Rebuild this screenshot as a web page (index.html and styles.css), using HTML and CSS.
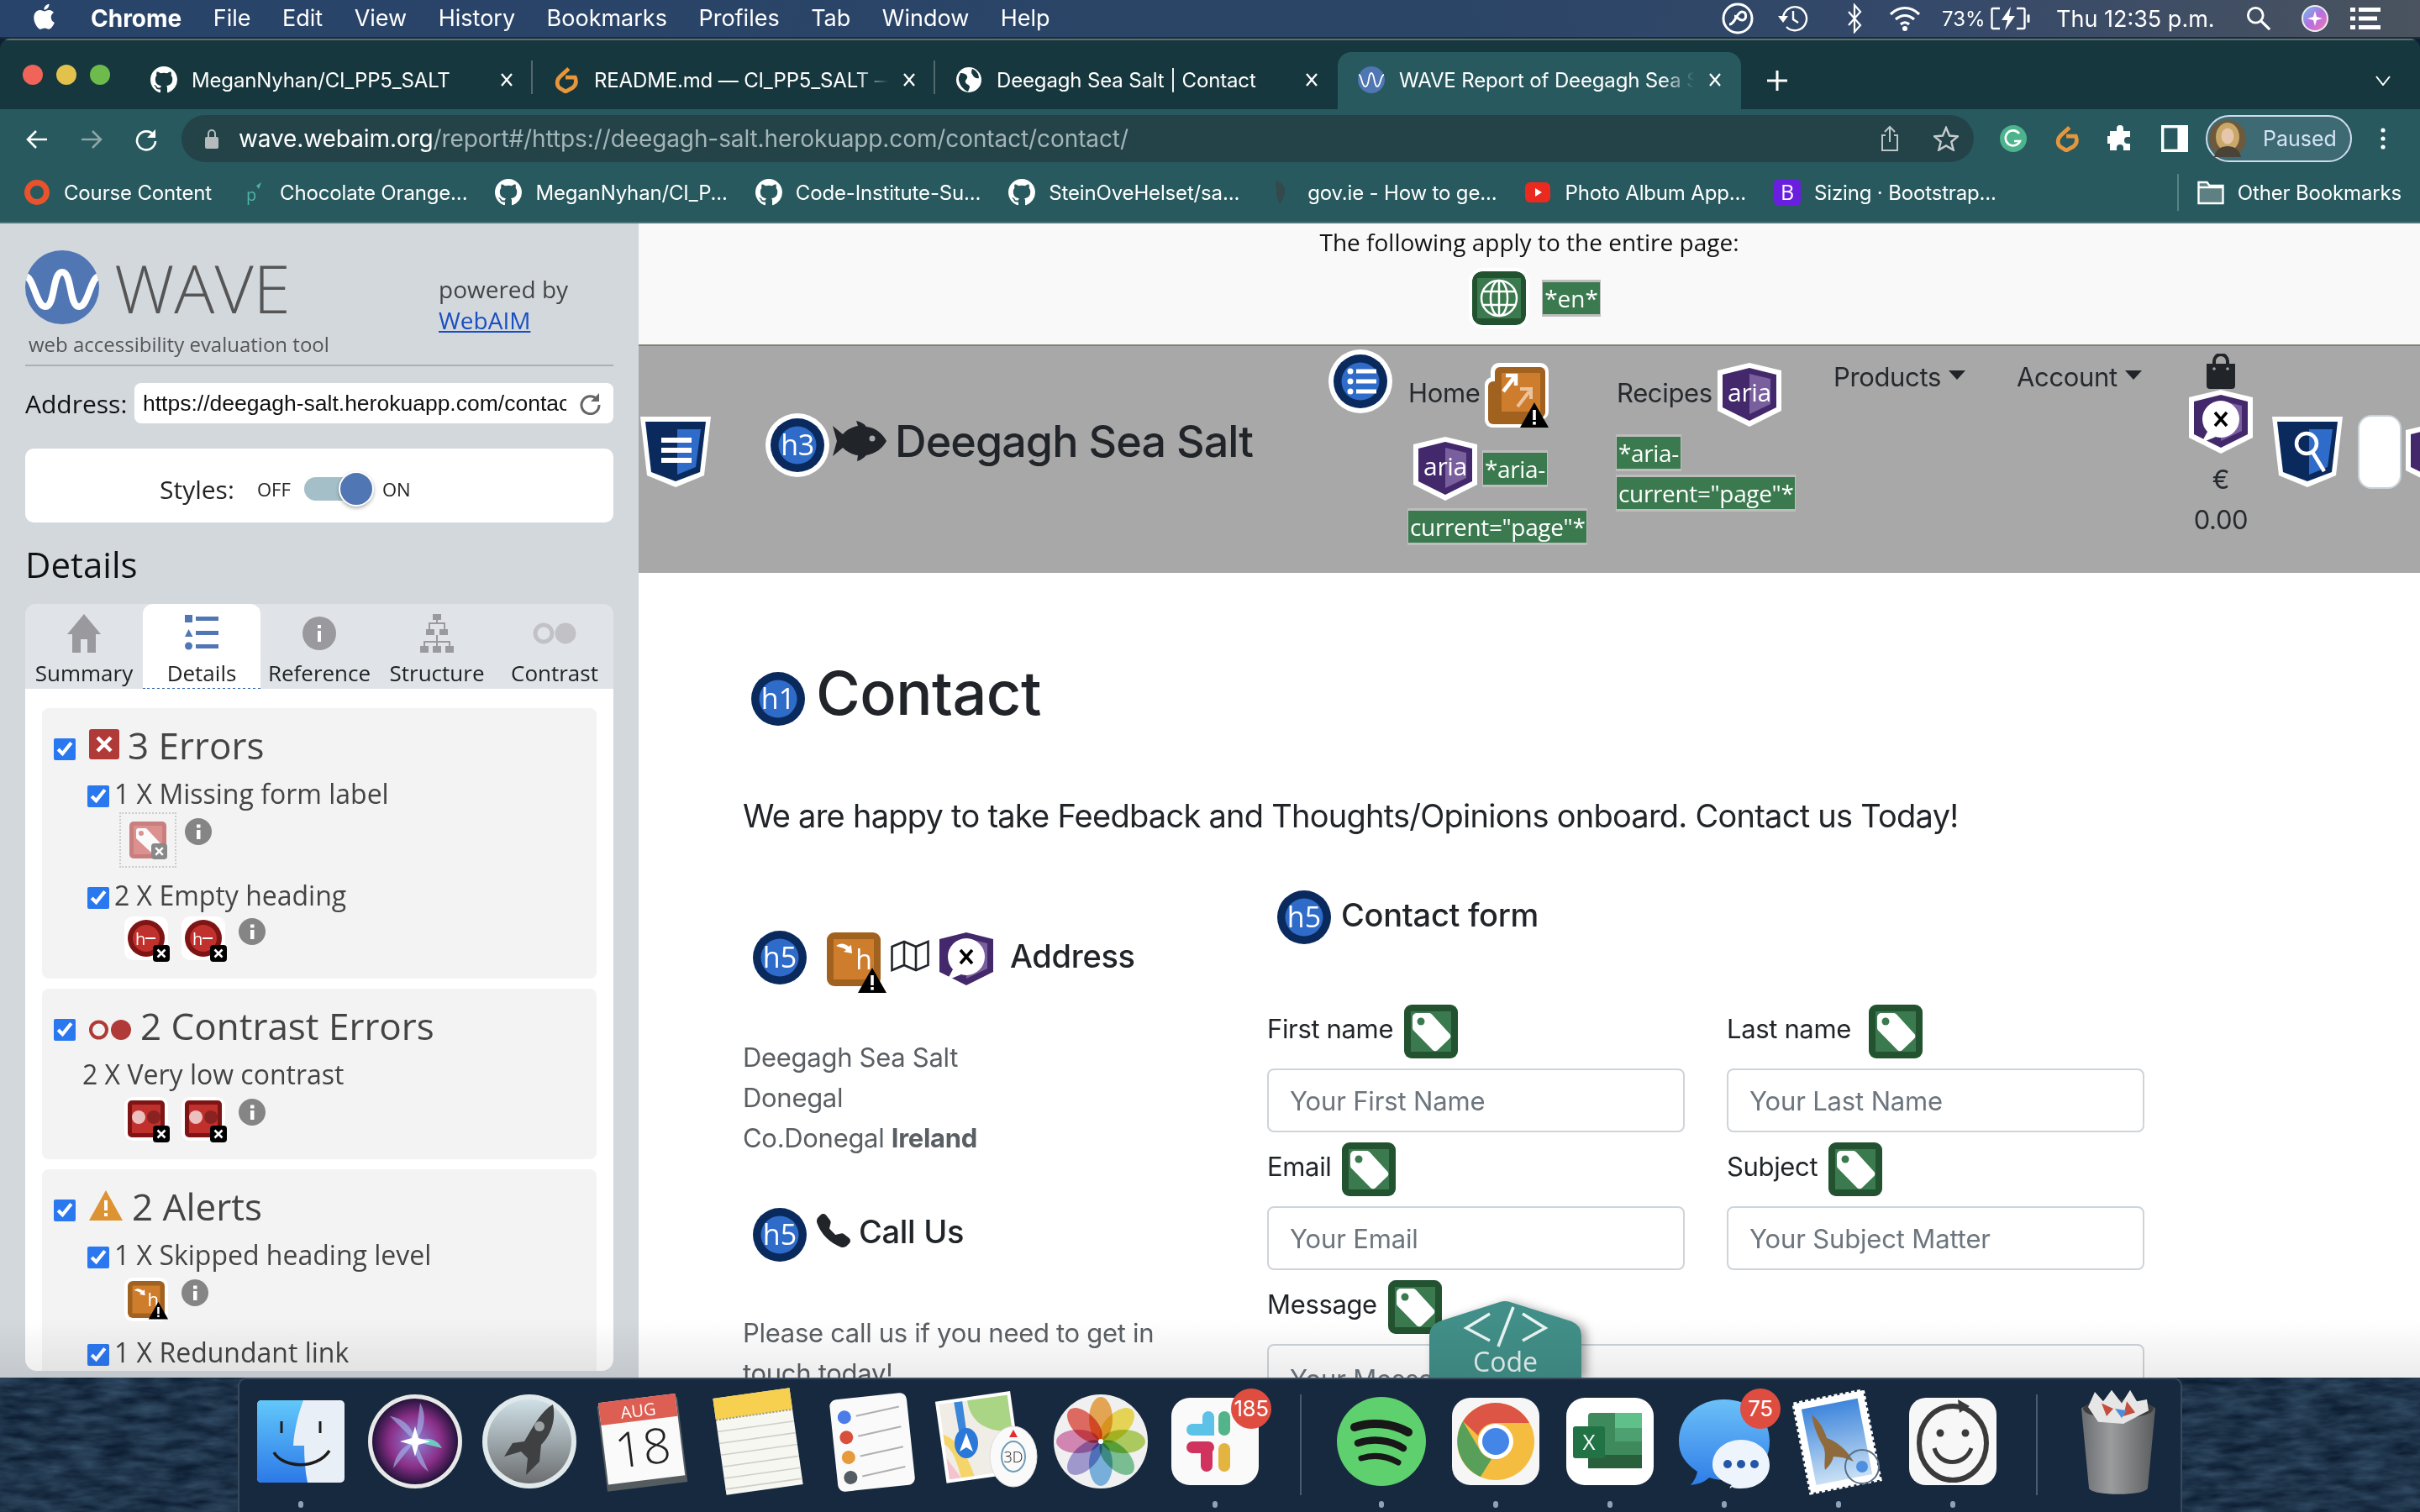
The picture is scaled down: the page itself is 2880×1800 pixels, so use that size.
FILE: index.html
```html
<!DOCTYPE html>
<html lang="en">
<head>
<meta charset="utf-8">
<title>WAVE Report</title>
<link rel="stylesheet" href="styles.css">
</head>
<body>
<svg class="defs" width="0" height="0" aria-hidden="true">
  <defs>
    <path id="gh" d="M8 0C3.58 0 0 3.58 0 8c0 3.54 2.29 6.53 5.47 7.59.4.07.55-.17.55-.38 0-.19-.01-.82-.01-1.49-2.01.37-2.53-.49-2.69-.94-.09-.23-.48-.94-.82-1.13-.28-.15-.68-.52-.01-.53.63-.01 1.08.58 1.23.82.72 1.21 1.87.87 2.33.66.07-.52.28-.87.51-1.07-1.78-.2-3.64-.89-3.64-3.95 0-.87.31-1.59.82-2.15-.08-.2-.36-1.02.08-2.12 0 0 .67-.21 2.2.82.64-.18 1.32-.27 2-.27.68 0 1.36.09 2 .27 1.53-1.04 2.2-.82 2.2-.82.44 1.1.16 1.92.08 2.12.51.56.82 1.27.82 2.15 0 3.07-1.87 3.75-3.65 3.95.29.25.54.73.54 1.48 0 1.07-.01 1.93-.01 2.2 0 .21.15.46.55.38A8.013 8.013 0 0016 8c0-4.42-3.58-8-8-8z"/>
    <g id="closex"><path d="M1 1l12 14M13 1L1 15" stroke="#fff" stroke-width="2.300" fill="none"/></g>
    <g id="gdoc"><path d="M19 3L8 13c-5 5-4 11-1 14l8 5 9-5c4-3 5-8 3-13H15" fill="none" stroke="#e8963c" stroke-width="5"/></g>
    <g id="head"><circle cx="38" cy="38" r="38" fill="#fff"/><circle cx="38" cy="38" r="32" fill="#0a2a5e"/><circle cx="38" cy="38" r="22.500" fill="#2f6bc8"/></g>
    <g id="label"><rect width="64" height="64" rx="9" fill="#22522f"/><rect x="8" y="8" width="48" height="48" fill="#3a7a4e"/><path d="M10 15a5 5 0 0 1 5-5h14c2 0 3 .6 4 1.600l21 23a4 4 0 0 1 0 6L40 54a4 4 0 0 1-6 0L11.500 31C10.500 30 10 29 10 27z" fill="#fff"/><circle cx="20" cy="20" r="4.500" fill="#3a7a4e"/></g>
    <g id="ariabase"><path d="M38 0L76 9V57L38 76 0 57V9z" fill="#fff"/><path d="M38 6L70 14V53L38 69 6 53V14z" fill="#43296b"/><path d="M38 13L63 19V49L38 61z" fill="#7a5f9f"/></g>
    <g id="warn"><path d="M17 0L34 30H0z" fill="#000"/><rect x="15.200" y="9" width="3.600" height="12" fill="#fff"/><rect x="15.200" y="23" width="3.600" height="3.600" fill="#fff"/></g>
    <g id="xbadge"><rect width="20" height="20" rx="4" fill="#000"/><path d="M5.500 5.500l9 9M14.500 5.500l-9 9" stroke="#fff" stroke-width="2.600"/></g>
    <g id="xbubble"><circle cx="38" cy="35" r="22" fill="#fff"/><path d="M22 50L15 63 32 56z" fill="#fff"/><path d="M31 27l14 16M45 27L31 43" stroke="#000" stroke-width="3.500"/></g>
    <g id="orangeh"><rect width="64" height="64" rx="9" fill="#a2621f"/><rect x="8" y="8" width="48" height="48" fill="#cd7d2c"/><path d="M11 16c5-4 11-3 15 1l3-2 1 10-10-2 3-2c-3-3-7-3-12-5z" fill="#fff"/><text x="44" y="44" class="svg-white" font-size="32" text-anchor="middle">h</text></g>
  </defs>
</svg>

<header class="menubar">
  <svg class="apple" viewBox="0 0 24 24"><path fill="#fff" d="M17.050 12.540c-.03-2.850 2.330-4.220 2.430-4.290-1.320-1.940-3.390-2.200-4.120-2.230-1.750-.18-3.420 1.030-4.310 1.030-.89 0-2.260-1-3.720-.98-1.910.03-3.680 1.110-4.660 2.820-1.990 3.450-.51 8.550 1.430 11.350.95 1.370 2.080 2.910 3.560 2.850 1.430-.06 1.970-.92 3.700-.92 1.730 0 2.210.92 3.720.89 1.540-.03 2.510-1.390 3.450-2.770 1.090-1.590 1.540-3.130 1.560-3.210-.03-.02-2.990-1.150-3.020-4.540zM14.200 4.160c.79-.96 1.320-2.290 1.180-3.610-1.140.05-2.520.76-3.330 1.710-.73.850-1.370 2.200-1.200 3.500 1.270.1 2.570-.65 3.350-1.600z"/></svg>
  <nav class="menus">
    <span class="menu-app">Chrome</span><span>File</span><span>Edit</span><span>View</span><span>History</span><span>Bookmarks</span><span>Profiles</span><span>Tab</span><span>Window</span><span>Help</span>
  </nav>
  <div class="status">
    <svg class="st st-cc" viewBox="0 0 40 40"><circle cx="20" cy="20" r="17" fill="none" stroke="#fff" stroke-width="3"/><path d="M10 27c7 0 9-15 15-15 6 0 6 9 1 10-4 1-7-5-10-5" fill="none" stroke="#fff" stroke-width="3"/></svg>
    <svg class="st st-tm" viewBox="0 0 36 36"><path d="M6 18a14 14 0 1 1 4 10M18 9v10l6 4" fill="none" stroke="#fff" stroke-width="2.400"/><path d="M0 15h12l-6 8z" fill="#fff"/></svg>
    <svg class="st st-bt" viewBox="0 0 20 36"><path d="M3 10l14 16-7 8V2l7 8L3 26" fill="none" stroke="#fff" stroke-width="2.200"/></svg>
    <svg class="st st-wifi" viewBox="0 0 40 32"><path d="M3 11c10-10 24-10 34 0M9 17c7-6 15-6 22 0M15 23c3-3 7-3 10 0" fill="none" stroke="#fff" stroke-width="3.200"/><circle cx="20" cy="28" r="3" fill="#fff"/></svg>
    <span class="st-pct">73%</span>
    <svg class="st st-bat" viewBox="0 0 48 28"><path d="M11 2H3a1.500 1.500 0 0 0-1.500 1.500v21A1.500 1.500 0 0 0 3 26h8M31 2h8a1.500 1.500 0 0 1 1.500 1.500v21A1.500 1.500 0 0 1 39 26h-8" fill="none" stroke="#fff" stroke-width="2.400"/><path d="M24 0L13 16h7l-3 12 12-17h-7z" fill="#fff"/><rect x="43.500" y="9" width="3" height="10" rx="1.500" fill="#fff"/></svg>
    <span class="st-time">Thu 12:35 p.m.</span>
    <svg class="st st-search" viewBox="0 0 32 32"><circle cx="12" cy="12" r="9.500" fill="none" stroke="#fff" stroke-width="3"/><path d="M19 19l11 11" stroke="#fff" stroke-width="3.400"/></svg>
    <svg class="st st-siri" viewBox="0 0 32 32"><defs><linearGradient id="sg" x1="0" y1="0" x2="1" y2="1"><stop offset="0" stop-color="#5ec8f0"/><stop offset=".5" stop-color="#b86ee0"/><stop offset="1" stop-color="#f07ab0"/></linearGradient></defs><circle cx="16" cy="16" r="15" fill="url(#sg)" stroke="#eee" stroke-width="2"/><path d="M16 7l2 7 7 2-7 2-2 7-2-7-7-2 7-2z" fill="#fff"/></svg>
    <svg class="st st-cc2" viewBox="0 0 36 28"><g fill="#fff"><rect x="0" y="1" width="6" height="5"/><rect x="10" y="1" width="26" height="5"/><rect x="0" y="11.500" width="6" height="5"/><rect x="10" y="11.500" width="22" height="5"/><rect x="0" y="22" width="6" height="5"/><rect x="10" y="22" width="26" height="5"/></g></svg>
  </div>
</header>

<div class="window">
  <div class="tabstrip">
    <div class="lights"><i class="light red"></i><i class="light yellow"></i><i class="light green"></i></div>
    <div class="tab tab-sep">
      <svg class="fav" viewBox="0 0 16 16"><use href="#gh" fill="#fff"/></svg>
      <span class="tab-text">MeganNyhan/CI_PP5_SALT</span>
      <svg class="tab-x" viewBox="0 0 14 16"><use href="#closex"/></svg>
    </div>
    <div class="tab tab-sep">
      <svg class="fav" viewBox="0 0 32 34"><use href="#gdoc"/></svg>
      <span class="tab-text tab-fade">README.md — CI_PP5_SALT — Gitpod Code</span>
      <svg class="tab-x" viewBox="0 0 14 16"><use href="#closex"/></svg>
    </div>
    <div class="tab">
      <svg class="fav" viewBox="0 0 32 32"><circle cx="16" cy="16" r="15" fill="#fff"/><path d="M6 8c4 0 7 1 8 4s-3 4-2 7 5 2 5 6l-2 5C9 28 3 20 4 13zM20 3c5 2 8 6 8 11-3 1-6-1-7-3s-3-3-1-8z" fill="#16373d"/></svg>
      <span class="tab-text">Deegagh Sea Salt | Contact</span>
      <svg class="tab-x" viewBox="0 0 14 16"><use href="#closex"/></svg>
    </div>
    <div class="tab tab-active">
      <svg class="fav" viewBox="0 0 32 32"><circle cx="16" cy="16" r="16" fill="#5076b3"/><path d="M1 10c4 0 3 14 8 14s3-16 7-16 3 16 7 16 4-14 8-14" fill="none" stroke="#fff" stroke-width="1.800"/></svg>
      <span class="tab-text tab-fade">WAVE Report of Deegagh Sea Salt</span>
      <svg class="tab-x" viewBox="0 0 14 16"><use href="#closex"/></svg>
    </div>
    <svg class="newtab" viewBox="0 0 24 24"><path d="M12 0v24M0 12h24" stroke="#fff" stroke-width="3"/></svg>
    <svg class="tabmenu" viewBox="0 0 20 12"><path d="M2 1l8 10 8-10" fill="none" stroke="#fff" stroke-width="2"/></svg>
  </div>

  <div class="toolbar">
    <div class="navbtns">
      <svg viewBox="0 0 28 28"><path d="M26 14H3M13 4L3 14l10 10" fill="none" stroke="#fff" stroke-width="2.600"/></svg>
      <svg viewBox="0 0 28 28"><path d="M2 14h23M15 4l10 10-10 10" fill="none" stroke="#8fa5a8" stroke-width="2.600"/></svg>
      <svg viewBox="0 0 28 28"><path d="M23 9a11 11 0 1 0 2 7" fill="none" stroke="#fff" stroke-width="2.600"/><path d="M25 2v10H15z" fill="#fff"/></svg>
    </div>
    <div class="omnibox">
      <svg class="lock" viewBox="0 0 18 24"><rect x="1" y="10" width="16" height="14" rx="2" fill="#b5bbbd"/><path d="M5 10V6a4 4 0 0 1 8 0v4" fill="none" stroke="#b5bbbd" stroke-width="2"/></svg>
      <span class="url"><span class="url-host">wave.webaim.org</span>/report#/https://deegagh-salt.herokuapp.com/contact/contact/</span>
      <svg class="omni-ico share" viewBox="0 0 24 32"><path d="M7 12H3v18h18V12h-4M12 20V2M6 8l6-6 6 6" fill="none" stroke="#bfc6c8" stroke-width="2"/></svg>
      <svg class="omni-ico star" viewBox="0 0 30 30"><path d="M15 2l4 9.500 10 .8-7.700 6.500 2.400 9.800L15 23.400l-8.700 5.200 2.400-9.800L1 12.300l10-.8z" fill="none" stroke="#c6cccd" stroke-width="2.400"/></svg>
    </div>
    <div class="exts">
      <svg viewBox="0 0 32 32"><circle cx="16" cy="16" r="16" fill="#4cb38d"/><path d="M23 10a9 9 0 1 0 1 9h-7" fill="none" stroke="#fff" stroke-width="2.600"/></svg>
      <svg viewBox="0 0 32 34"><use href="#gdoc"/></svg>
      <svg viewBox="0 0 32 32"><path d="M11 4a4 4 0 0 1 8 0v3h8v7h-3a4 4 0 0 0 0 8h3v8h-8v-3a4 4 0 0 0-8 0v3H3v-8H1a4.500 4.500 0 0 1 0-9h2V7h8z" fill="#fff"/></svg>
      <svg viewBox="0 0 28 28"><rect x="1.500" y="1.500" width="25" height="25" fill="none" stroke="#fff" stroke-width="3"/><rect x="17" y="1.500" width="10" height="25" fill="#fff"/></svg>
    </div>
    <div class="paused">
      <svg class="avatar" viewBox="0 0 44 44"><circle cx="22" cy="22" r="22" fill="#6d5a3c"/><ellipse cx="22" cy="20" rx="14" ry="17" fill="#c9a86a"/><ellipse cx="22" cy="19" rx="7.500" ry="9.500" fill="#e6c7ab"/><path d="M6 44c2-10 9-13 16-13s14 3 16 13z" fill="#4a4438"/></svg>
      <span>Paused</span>
    </div>
    <svg class="kebab" viewBox="0 0 6 26"><circle cx="3" cy="3" r="2.600" fill="#fff"/><circle cx="3" cy="13" r="2.600" fill="#fff"/><circle cx="3" cy="23" r="2.600" fill="#fff"/></svg>
  </div>

  <div class="bookmarks">
    <div class="bm"><svg viewBox="0 0 32 32"><circle cx="16" cy="16" r="11.500" fill="none" stroke="#e8532b" stroke-width="7"/></svg><span>Course Content</span></div>
    <div class="bm"><svg viewBox="0 0 32 32"><text x="8" y="26" class="svg-teal" font-size="20">p</text><path d="M20 8l6-4-3 8z" fill="#4fb3a3"/></svg><span>Chocolate Orange...</span></div>
    <div class="bm"><svg viewBox="0 0 16 16"><use href="#gh" fill="#fff"/></svg><span>MeganNyhan/CI_P...</span></div>
    <div class="bm"><svg viewBox="0 0 16 16"><use href="#gh" fill="#fff"/></svg><span>Code-Institute-Su...</span></div>
    <div class="bm"><svg viewBox="0 0 16 16"><use href="#gh" fill="#fff"/></svg><span>SteinOveHelset/sa...</span></div>
    <div class="bm"><svg viewBox="0 0 32 32"><path d="M11 2c8 3 11 8 10 14s-3 9-6 14c-2-6-4-8-4-14S9 7 11 2z" fill="#33494c"/></svg><span>gov.ie - How to ge...</span></div>
    <div class="bm"><svg viewBox="0 0 32 32"><rect y="4" width="30" height="24" rx="6" fill="#ea2a1f"/><path d="M12 11l8 5-8 5z" fill="#fff"/></svg><span>Photo Album App...</span></div>
    <div class="bm"><svg viewBox="0 0 32 32"><rect width="32" height="32" rx="6" fill="#6a1fe0"/><text x="16" y="25" class="svg-white" font-size="25" text-anchor="middle">B</text></svg><span>Sizing · Bootstrap...</span></div>
    <div class="bm-other"><svg viewBox="0 0 32 30"><path d="M1.500 3h10l3 4h16v21h-29z" fill="#5e8083" stroke="#fff" stroke-width="2.400"/><path d="M1.500 9h29" stroke="#fff" stroke-width="2.400"/></svg><span>Other Bookmarks</span></div>
  </div>

  <div class="content">
    <aside class="sidebar">
      <div class="brand">
        <div class="brand-left">
          <div class="brand-mark">
            <svg class="wave-logo" viewBox="0 0 88 88"><defs><clipPath id="lc"><circle cx="44" cy="44" r="44"/></clipPath></defs><circle cx="44" cy="44" r="44" fill="#5076b3"/><path clip-path="url(#lc)" d="M-2 32C10 26 12 67 24 67 36 67 32 26 44 26 56 26 52 67 64 67 76 67 78 26 90 32" fill="none" stroke="#fff" stroke-width="8"/></svg>
            <span class="wordmark">WAVE</span>
          </div>
          <div class="tagline">web accessibility evaluation tool</div>
        </div>
        <div class="brand-right">powered by<br><a href="#">WebAIM</a></div>
      </div>
      <div class="address">
        <span class="address-label">Address:</span>
        <div class="address-box">
          <span class="address-url">https://deegagh-salt.herokuapp.com/contact/contact/</span>
          <svg class="address-reload" viewBox="0 0 28 28"><path d="M23 10a10.500 10.500 0 1 0 2 6" fill="none" stroke="#666" stroke-width="3"/><path d="M25 2v10H15z" fill="#666"/></svg>
        </div>
      </div>
      <div class="styles-box">
        <span class="styles-label">Styles:</span>
        <span class="sw-text sw-off">OFF</span>
        <span class="sw-track"><i class="sw-knob"></i></span>
        <span class="sw-text">ON</span>
      </div>
      <h2 class="details-title">Details</h2>
      <div class="side-tabs">
        <div class="side-tab"><svg viewBox="0 0 40 46"><path d="M20 0L40 24h-6v22H24V30h-8v16H6V24H0z" fill="#9a9a9e"/></svg><span>Summary</span></div>
        <div class="side-tab side-tab-active"><svg viewBox="0 0 40 46"><g fill="#5076b3"><rect y="1" width="9" height="9"/><path d="M4.500 18l5 9H0z"/><circle cx="4.500" cy="38" r="4.500"/><rect x="13" y="3" width="27" height="5"/><rect x="13" y="20" width="27" height="5"/><rect x="13" y="36" width="27" height="5"/></g></svg><span>Details</span></div>
        <div class="side-tab"><svg viewBox="0 0 40 46"><circle cx="20" cy="23" r="20" fill="#9a9a9e"/><rect x="18" y="20" width="4" height="13" fill="#fff"/><rect x="18" y="13" width="4" height="4" fill="#fff"/></svg><span>Reference</span></div>
        <div class="side-tab"><svg viewBox="0 0 40 46"><g fill="#9a9a9e"><rect x="15" y="0" width="10" height="7"/><rect x="7" y="18" width="10" height="7"/><rect x="23" y="18" width="10" height="7"/><rect x="0" y="38" width="10" height="8"/><rect x="15" y="38" width="10" height="8"/><rect x="30" y="38" width="10" height="8"/><path d="M19 7h2v5h-9v6h-2v-8h9zM21 12h7v6h2v-8h-9zM19 25h2v13h-2zM4 32h32v6h-2v-4H6v4H4z"/></g></svg><span>Structure</span></div>
        <div class="side-tab"><svg class="side-contrast" viewBox="0 0 52 26"><circle cx="13" cy="13" r="10" fill="none" stroke="#c2c2c6" stroke-width="5"/><circle cx="39" cy="13" r="12.500" fill="#c2c2c6"/></svg><span>Contrast</span></div>
      </div>
      <div class="panel">
        <section class="card">
          <div class="card-head">
            <input class="cb cb-head" type="checkbox" checked aria-label="Errors">
            <svg class="cat-ico" viewBox="0 0 36 36"><rect width="36" height="36" rx="3" fill="#b03a38"/><path d="M10 10l16 16M26 10L10 26" stroke="#fff" stroke-width="4.500"/></svg>
            <span>3 Errors</span>
          </div>
          <div class="sub"><input class="cb" type="checkbox" checked aria-label="Missing form label"><span>1 X Missing form label</span></div>
          <div class="ico-row ico-row-dotted">
            <span class="ico-dotted">
              <svg class="mini" viewBox="0 0 44 44"><g opacity=".55"><rect width="44" height="44" rx="5" fill="#a82020"/><rect x="5" y="5" width="34" height="34" fill="#c84040"/><path d="M8 11a3 3 0 0 1 3-3h9l16 17a3 3 0 0 1 0 4l-7 7a3 3 0 0 1-4 0L8 20z" fill="#fff"/><circle cx="14" cy="14" r="3" fill="#c84040"/></g><g transform="translate(26 26) scale(.95)"><rect width="20" height="20" rx="4" fill="#888"/><path d="M5.500 5.500l9 9M14.500 5.500l-9 9" stroke="#fff" stroke-width="2.600"/></g></svg>
            </span>
            <svg class="info info-first" viewBox="0 0 32 32"><circle cx="16" cy="16" r="16" fill="#858585"/><rect x="14" y="14" width="4.500" height="11" fill="#fff"/><rect x="14" y="7.500" width="4.500" height="4" fill="#fff"/></svg>
          </div>
          <div class="sub sub-gap"><input class="cb" type="checkbox" checked aria-label="Empty heading"><span class="sub-tight">2 X Empty heading</span></div>
          <div class="ico-row ico-row-2">
            <span class="mini-wrap"><svg class="mini" viewBox="0 0 44 44"><circle cx="22" cy="22" r="22" fill="#7e1414"/><circle cx="22" cy="22" r="16" fill="#c0302c"/><text x="9" y="30" class="svg-white" font-size="20">h</text><rect x="21" y="21" width="12" height="2" fill="#fff"/><use href="#xbadge" transform="translate(30 30)"/></svg></span>
            <span class="mini-wrap"><svg class="mini" viewBox="0 0 44 44"><circle cx="22" cy="22" r="22" fill="#7e1414"/><circle cx="22" cy="22" r="16" fill="#c0302c"/><text x="9" y="30" class="svg-white" font-size="20">h</text><rect x="21" y="21" width="12" height="2" fill="#fff"/><use href="#xbadge" transform="translate(30 30)"/></svg></span>
            <svg class="info" viewBox="0 0 32 32"><circle cx="16" cy="16" r="16" fill="#858585"/><rect x="14" y="14" width="4.500" height="11" fill="#fff"/><rect x="14" y="7.500" width="4.500" height="4" fill="#fff"/></svg>
          </div>
        </section>
        <section class="card">
          <div class="card-head">
            <input class="cb cb-head" type="checkbox" checked aria-label="Contrast errors">
            <svg class="cat-ico cat-contrast" viewBox="0 0 50 24"><circle cx="11.500" cy="12" r="9.500" fill="none" stroke="#b03a38" stroke-width="4"/><circle cx="38" cy="12" r="12" fill="#b03a38"/></svg>
            <span>2 Contrast Errors</span>
          </div>
          <div class="sub sub-plain"><span>2 X Very low contrast</span></div>
          <div class="ico-row ico-row-2 ico-row-c">
            <span class="mini-wrap"><svg class="mini" viewBox="0 0 44 44"><rect width="44" height="44" rx="5" fill="#7e1414"/><rect x="5" y="5" width="34" height="34" fill="#c0302c"/><circle cx="13" cy="20" r="8" fill="#edc0c0"/><circle cx="31" cy="20" r="8" fill="#8a2222"/><use href="#xbadge" transform="translate(30 30)"/></svg></span>
            <span class="mini-wrap"><svg class="mini" viewBox="0 0 44 44"><rect width="44" height="44" rx="5" fill="#7e1414"/><rect x="5" y="5" width="34" height="34" fill="#c0302c"/><circle cx="13" cy="20" r="8" fill="#edc0c0"/><circle cx="31" cy="20" r="8" fill="#8a2222"/><use href="#xbadge" transform="translate(30 30)"/></svg></span>
            <svg class="info" viewBox="0 0 32 32"><circle cx="16" cy="16" r="16" fill="#858585"/><rect x="14" y="14" width="4.500" height="11" fill="#fff"/><rect x="14" y="7.500" width="4.500" height="4" fill="#fff"/></svg>
          </div>
        </section>
        <section class="card">
          <div class="card-head">
            <input class="cb cb-head" type="checkbox" checked aria-label="Alerts">
            <svg class="cat-ico cat-alert" viewBox="0 0 40 36"><path d="M20 0l20 36H0z" fill="#dd9233"/><rect x="18" y="12" width="4" height="12" fill="#fff"/><rect x="18" y="27" width="4" height="4" fill="#fff"/></svg>
            <span>2 Alerts</span>
          </div>
          <div class="sub"><input class="cb" type="checkbox" checked aria-label="Skipped heading level"><span>1 X Skipped heading level</span></div>
          <div class="ico-row ico-row-2 ico-row-c">
            <span class="mini-wrap"><svg class="mini" viewBox="0 0 64 64"><use href="#orangeh"/><use href="#warn" transform="translate(36 36)"/></svg></span>
            <svg class="info info-a" viewBox="0 0 32 32"><circle cx="16" cy="16" r="16" fill="#858585"/><rect x="14" y="14" width="4.500" height="11" fill="#fff"/><rect x="14" y="7.500" width="4.500" height="4" fill="#fff"/></svg>
          </div>
          <div class="sub sub-last"><input class="cb" type="checkbox" checked aria-label="Redundant link"><span>1 X Redundant link</span></div>
        </section>
      </div>
    </aside>

    <main class="report">
      <div class="notice">
        <p class="notice-text">The following apply to the entire page:</p>
        <div class="notice-row">
          <svg class="ico-64 ringed" viewBox="0 0 64 64"><rect width="64" height="64" rx="9" fill="#22522f"/><rect x="6" y="8" width="52" height="48" fill="#3a7a4e"/><g fill="none" stroke="#fff" stroke-width="2.500"><circle cx="32" cy="32" r="21"/><ellipse cx="32" cy="32" rx="10" ry="21"/><path d="M32 11v42M12 24h40M12 40h40"/></g></svg>
          <span class="tag">*en*</span>
        </div>
      </div>

      <div class="site-header">
        <svg class="hdr-shield" viewBox="0 0 84 84"><path d="M0 0H84L76 70 42 84 8 70z" fill="#fff"/><path d="M6 6H78L71 66 42 77 13 66z" fill="#0a2a5e"/><path d="M44 15H72L66 60 44 69z" fill="#2f6bc8"/><g fill="#fff"><rect x="25" y="25" width="36" height="6"/><rect x="25" y="37" width="36" height="6"/><rect x="25" y="49" width="36" height="6"/></g></svg>
        <div class="site-brand">
          <svg class="head76" viewBox="0 0 76 76"><use href="#head"/><text x="38" y="50" class="svg-white" font-size="34" text-anchor="middle">h3</text></svg>
          <svg class="fish" viewBox="0 0 64 48"><path d="M0 6l12 10c5-6 12-9 18-10l-2-6c5 1 9 3 12 7 11 1 19 8 24 17-5 9-13 15-24 17-3 3-7 6-11 7l1-7c-7-1-13-4-18-9L0 42l5-18z" fill="#212529"/><circle cx="47" cy="21" r="3.500" fill="#a8a8a8"/></svg>
          <span class="site-name">Deegagh Sea Salt</span>
        </div>
        <svg class="head76 hdr-list" viewBox="0 0 76 76"><use href="#head"/><g fill="#fff"><circle cx="26" cy="26" r="3.500"/><circle cx="26" cy="38" r="3.500"/><circle cx="26" cy="50" r="3.500"/><rect x="33" y="23.500" width="24" height="5"/><rect x="33" y="35.500" width="24" height="5"/><rect x="33" y="47.500" width="24" height="5"/></g></svg>
        <div class="nav-col nav-home">
          <div class="nav-row">
            <span class="nav-link">Home</span>
            <svg class="link-ico" viewBox="0 0 76 77"><rect x="0" y="17" width="62" height="60" rx="9" fill="#fff"/><rect x="7" y="0" width="69" height="68" rx="10" fill="#fff"/><rect x="4" y="22" width="56" height="51" rx="6" fill="#a2621f"/><rect x="12" y="5" width="60" height="60" rx="6" fill="#a2621f"/><rect x="20" y="12" width="46" height="46" fill="#cd7d2c"/><path d="M22 34l14-18M25 15h12v12" fill="none" stroke="#fff" stroke-width="4.500"/><path d="M39 52l14-18M42 31h13v12" fill="none" stroke="#ecc3a0" stroke-width="4"/><use href="#warn" transform="translate(42 47)"/></svg>
          </div>
          <div class="nav-row-aria">
            <svg class="aria-ico" viewBox="0 0 76 76"><use href="#ariabase"/><text x="38" y="46" class="svg-white" font-size="30" text-anchor="middle">aria</text></svg>
            <span class="tag">*aria-</span>
          </div>
          <span class="tag tag-block">current="page"*</span>
        </div>
        <div class="nav-col nav-recipes">
          <div class="nav-row">
            <span class="nav-link">Recipes</span>
            <svg class="aria-ico" viewBox="0 0 76 76"><use href="#ariabase"/><text x="38" y="46" class="svg-white" font-size="30" text-anchor="middle">aria</text></svg>
          </div>
          <span class="tag tag-block tag-r1">*aria-</span>
          <span class="tag tag-block tag-r2">current="page"*</span>
        </div>
        <div class="nav-drop nav-products"><span>Products</span><i class="caret"></i></div>
        <div class="nav-drop nav-account"><span>Account</span><i class="caret"></i></div>
        <div class="cart">
          <svg class="bag" viewBox="0 0 38 42"><path d="M11 14V9a8 8 0 0 1 16 0v5" fill="none" stroke="#212529" stroke-width="4"/><path d="M2 12h34v26a4 4 0 0 1-4 4H6a4 4 0 0 1-4-4z" fill="#212529"/><circle cx="11" cy="18" r="1.800" fill="#a8a8a8"/><circle cx="27" cy="18" r="1.800" fill="#a8a8a8"/></svg>
          <svg class="aria-ico" viewBox="0 0 76 76"><use href="#ariabase"/><use href="#xbubble"/></svg>
          <span class="cart-euro">€</span>
          <span class="cart-val">0.00</span>
        </div>
        <svg class="hdr-shield hdr-search" viewBox="0 0 84 84"><path d="M0 0H84L76 70 42 84 8 70z" fill="#fff"/><path d="M6 6H78L71 66 42 77 13 66z" fill="#0a2a5e"/><path d="M44 15H72L66 60 44 69z" fill="#2f6bc8"/><circle cx="41" cy="32" r="12" fill="none" stroke="#fff" stroke-width="4.500"/><path d="M48 42l14 23" stroke="#fff" stroke-width="4.500"/></svg>
        <span class="hdr-pill"></span>
        <svg class="aria-ico hdr-partial" viewBox="0 0 76 76"><use href="#ariabase"/></svg>
      </div>

      <div class="page">
        <div class="h1-row">
          <svg class="head76" viewBox="0 0 76 76"><use href="#head"/><text x="38" y="50" class="svg-white" font-size="34" text-anchor="middle">h1</text></svg>
          <h1>Contact</h1>
        </div>
        <p class="lead">We are happy to take Feedback and Thoughts/Opinions onboard. Contact us Today!</p>
        <div class="columns">
          <div class="col-left">
            <div class="head-row head-addr">
              <svg class="head76" viewBox="0 0 76 76"><use href="#head"/><text x="38" y="50" class="svg-white" font-size="34" text-anchor="middle">h5</text></svg>
              <svg class="ico-orange" viewBox="0 0 72 72"><use href="#orangeh"/><use href="#warn" transform="translate(37 42)"/></svg>
              <svg class="ico-map" viewBox="0 0 46 38"><path d="M1.500 8L16 2l14 6 14.500-6v28L30 36l-14-6-14.500 6zM16 2v28M30 8v28" fill="none" stroke="#212529" stroke-width="2.600"/></svg>
              <svg class="ico-ariax" viewBox="6 4 64 68"><use href="#ariabase"/><use href="#xbubble"/></svg>
              <h5 class="addr-title">Address</h5>
            </div>
            <p class="muted addr-lines">Deegagh Sea Salt<br>Donegal<br>Co.Donegal <strong>Ireland</strong></p>
            <div class="head-row head-call">
              <svg class="head76" viewBox="0 0 76 76"><use href="#head"/><text x="38" y="50" class="svg-white" font-size="34" text-anchor="middle">h5</text></svg>
              <svg class="phone" viewBox="0 0 16 16"><path fill="#212529" d="M1.885.511a1.745 1.745 0 0 1 2.610.163L6.290 2.980c.329.423.445.974.315 1.494l-.547 2.190a.678.678 0 0 0 .178.643l2.457 2.457a.678.678 0 0 0 .644.178l2.189-.547a1.745 1.745 0 0 1 1.494.315l2.306 1.794c.829.645.905 1.870.163 2.611l-1.034 1.034c-.74.74-1.846 1.065-2.877.702a18.634 18.634 0 0 1-7.010-4.420 18.634 18.634 0 0 1-4.420-7.009c-.362-1.030-.037-2.137.703-2.877L1.885.511z"/></svg>
              <h5 class="call-title">Call Us</h5>
            </div>
            <p class="muted call-text">Please call us if you need to get in touch today!</p>
          </div>
          <div class="col-right">
            <div class="head-row head-form">
              <svg class="head76" viewBox="0 0 76 76"><use href="#head"/><text x="38" y="50" class="svg-white" font-size="34" text-anchor="middle">h5</text></svg>
              <h5 class="form-title">Contact form</h5>
            </div>
            <form class="form-grid">
              <div class="field">
                <div class="field-label"><label for="f1">First name</label><svg class="ico-label" viewBox="0 0 64 64"><use href="#label"/></svg></div>
                <input id="f1" class="form-input" placeholder="Your First Name">
              </div>
              <div class="field">
                <div class="field-label"><label for="f2">Last name</label><svg class="ico-label ico-label-wide" viewBox="0 0 64 64"><use href="#label"/></svg></div>
                <input id="f2" class="form-input" placeholder="Your Last Name">
              </div>
              <div class="field">
                <div class="field-label"><label for="f3">Email</label><svg class="ico-label" viewBox="0 0 64 64"><use href="#label"/></svg></div>
                <input id="f3" class="form-input" placeholder="Your Email">
              </div>
              <div class="field">
                <div class="field-label"><label for="f4">Subject</label><svg class="ico-label" viewBox="0 0 64 64"><use href="#label"/></svg></div>
                <input id="f4" class="form-input" placeholder="Your Subject Matter">
              </div>
              <div class="field field-wide">
                <div class="field-label"><label for="f5">Message</label><svg class="ico-label" viewBox="0 0 64 64"><use href="#label"/></svg></div>
                <textarea id="f5" class="form-input form-area" placeholder="Your Message"></textarea>
              </div>
            </form>
          </div>
        </div>
      </div>
      <div class="code-btn">
        <svg class="code-shape" viewBox="0 0 181 91"><path d="M0 91V41Q0 29 12 24L84 1Q90 -1 96 1L169 24Q181 29 181 41V91z" fill="#418f88"/><path d="M72 15L44 32 72 47M111 15l27 17-27 15M100 7L82 54" fill="none" stroke="#eaf4f2" stroke-width="3.500"/></svg>
        <span class="code-label">Code</span>
      </div>
    </main>
    <div class="win-fade"></div>
  </div>
</div>

<footer class="desktop">
  <svg class="water" width="2880" height="160" aria-hidden="true"><filter id="wf"><feTurbulence type="fractalNoise" baseFrequency=".025 .09" numOctaves="3" seed="4"/><feColorMatrix values="0 0 0 0 .08  0 0 0 0 .17  0 0 0 0 .27  .8 0 0 0 -.15"/></filter><rect width="2880" height="160" fill="#0e1f33"/><rect width="2880" height="160" filter="url(#wf)"/></svg>
  <div class="dock">
    <div class="dock-item running"><svg viewBox="0 0 120 120"><defs><linearGradient id="fa" x1="0" y1="0" x2="0" y2="1"><stop offset="0" stop-color="#62c8fa"/><stop offset="1" stop-color="#2c79e8"/></linearGradient></defs><rect x="8" y="11" width="104" height="98" rx="5" fill="#e9eff6"/><path d="M13 11h50c-6 16-11 36-12 54h13c0 14 1 30 4 44H13a5 5 0 0 1-5-5V16a5 5 0 0 1 5-5z" fill="url(#fa)"/><path d="M37 36v14M83 36v14" stroke="#1c1c1c" stroke-width="3"/><path d="M28 73c10 18 50 22 66-2" fill="none" stroke="#1c1c1c" stroke-width="3.500"/></svg><i class="dock-dot"></i></div>
    <div class="dock-item"><svg viewBox="0 0 120 120"><defs><radialGradient id="si" cx=".5" cy=".5" r=".55"><stop offset="0" stop-color="#8f86d8"/><stop offset=".55" stop-color="#8a2f88"/><stop offset="1" stop-color="#0a0c28"/></radialGradient></defs><circle cx="60" cy="60" r="56" fill="#e8e8e8"/><circle cx="60" cy="60" r="51" fill="url(#si)"/><path d="M60 60L30 30c16 2 28 14 30 30zM60 60l-26 32c2-16 12-28 26-32zM60 60l16 36c-12-8-18-22-16-36zM60 60l6-46c8 14 6 32-6 46z" fill="#9fb6ea" opacity=".65"/><path d="M60 60l32 8c-6-12-20-14-32-8z" fill="#68e0c8" opacity=".85"/><path d="M60 42l4 14 14 4-14 4-4 14-4-14-14-4 14-4z" fill="#fff"/></svg><i class="dock-dot off"></i></div>
    <div class="dock-item"><svg viewBox="0 0 120 120"><defs><linearGradient id="lp" x1="0" y1="0" x2="0" y2="1"><stop offset="0" stop-color="#cfe0e6"/><stop offset="1" stop-color="#6c6e70"/></linearGradient></defs><circle cx="60" cy="60" r="56" fill="#dfe8ea"/><circle cx="60" cy="60" r="50" fill="url(#lp)"/><path d="M88 16c4 18-2 36-14 48l-2 20-16 16 2-20-8-8-20 6 10-16 14-2C66 40 74 24 88 16z" fill="#3e4042"/><circle cx="72" cy="42" r="6" fill="#9ea3a5"/></svg><i class="dock-dot off"></i></div>
    <div class="dock-item"><svg viewBox="0 0 120 120"><g transform="rotate(-7 60 60)"><rect x="10" y="12" width="96" height="102" fill="#555c60"/><rect x="12" y="8" width="92" height="98" fill="#fafafa"/><rect x="12" y="8" width="92" height="27" fill="#dd5f53"/><text x="58" y="30" class="svg-white" font-size="20" text-anchor="middle">AUG</text><text x="58" y="88" class="svg-ink" font-size="58" text-anchor="middle">18</text></g></svg><i class="dock-dot off"></i></div>
    <div class="dock-item"><svg viewBox="0 0 120 120"><g transform="rotate(-8 60 60)"><rect x="14" y="2" width="92" height="116" fill="#f7f7f2"/><rect x="14" y="2" width="92" height="26" fill="#f6d04e"/><path d="M14 28h92" stroke="#999" stroke-width="2" stroke-dasharray="2 2"/><path d="M14 42h92M14 56h92M14 70h92M14 84h92M14 98h92M14 111h92" stroke="#cfcfc8" stroke-width="1.600"/></g></svg><i class="dock-dot off"></i></div>
    <div class="dock-item"><svg viewBox="0 0 120 120"><g transform="rotate(-6 60 60)"><rect x="14" y="6" width="92" height="110" rx="8" fill="#fafafa"/><circle cx="30" cy="28" r="8" fill="#4a7de8"/><circle cx="30" cy="52" r="8" fill="#d84f3c"/><circle cx="30" cy="76" r="8" fill="#e69a3c"/><circle cx="30" cy="100" r="8" fill="#555b62"/><path d="M44 28l52-6M44 52l52-6M44 76l52-6M44 100l52-6" stroke="#b0b0b0" stroke-width="2"/></g></svg><i class="dock-dot off"></i></div>
    <div class="dock-item"><svg viewBox="0 0 120 120"><g transform="rotate(-8 50 60)"><rect x="6" y="6" width="90" height="98" fill="#fff"/><rect x="10" y="10" width="82" height="90" fill="#f0ede6"/><path d="M44 10c0 24 14 40 48 44V10z" fill="#a9d585"/><path d="M10 46c14 8 24 22 30 54H24c-2-20-6-36-14-42z" fill="#f5d56a"/><path d="M10 74l14 26H10z" fill="#f3c4cf"/><path d="M28 10h10v62H30z" fill="#3a86d8"/></g><ellipse cx="36" cy="62" rx="14" ry="18" fill="#2a78d8"/><path d="M36 50l8 22-8-5-8 5z" fill="#fff"/><ellipse cx="92" cy="78" rx="28" ry="36" fill="#fafafa" stroke="#ddd"/><ellipse cx="92" cy="78" rx="14" ry="18" fill="none" stroke="#6f9eb5" stroke-width="2"/><text x="92" y="85" class="svg-ink" font-size="18" text-anchor="middle">3D</text><path d="M92 46l5 9H87z" fill="#e23030"/></svg><i class="dock-dot off"></i></div>
    <div class="dock-item"><svg viewBox="0 0 120 120"><circle cx="60" cy="60" r="56" fill="#f0f0f0"/><g class="petals"><ellipse cx="60" cy="33" rx="14" ry="26" fill="#f0a23c"/><ellipse cx="60" cy="33" rx="14" ry="26" fill="#f1dc3c" transform="rotate(45 60 60)"/><ellipse cx="60" cy="33" rx="14" ry="26" fill="#a9cf48" transform="rotate(90 60 60)"/><ellipse cx="60" cy="33" rx="14" ry="26" fill="#6cc08a" transform="rotate(135 60 60)"/><ellipse cx="60" cy="33" rx="14" ry="26" fill="#6aaee4" transform="rotate(180 60 60)"/><ellipse cx="60" cy="33" rx="14" ry="26" fill="#9a92d4" transform="rotate(225 60 60)"/><ellipse cx="60" cy="33" rx="14" ry="26" fill="#d87ab0" transform="rotate(270 60 60)"/><ellipse cx="60" cy="33" rx="14" ry="26" fill="#e8584c" transform="rotate(315 60 60)"/></g><circle cx="60" cy="60" r="3" fill="#fff"/></svg><i class="dock-dot off"></i></div>
    <div class="dock-item running"><svg viewBox="0 0 120 120"><rect x="8" y="8" width="104" height="104" rx="22" fill="#fafafa"/><g fill="none" stroke-width="14" stroke-linecap="round"><path d="M52 31v15H33" stroke="#5cc2e8"/><path d="M71 31v15" stroke="#52b488"/><path d="M52 67H33" stroke="#d0345e"/><path d="M50 67v22" stroke="#d0345e"/><path d="M71 69v20" stroke="#e3b43f"/></g></svg><span class="dock-badge">185</span><i class="dock-dot"></i></div>
    <span class="dock-sep dock-sep-1"></span>
    <div class="dock-item running"><svg viewBox="0 0 120 120"><circle cx="60" cy="60" r="53" fill="#5fd06e"/><g fill="none" stroke="#181818" stroke-linecap="round"><path d="M28 43c20-7 44-5 64 6" stroke-width="10"/><path d="M32 62c18-6 38-4 54 6" stroke-width="8.500"/><path d="M36 80c16-5 30-3 44 5" stroke-width="7"/></g></svg><i class="dock-dot"></i></div>
    <div class="dock-item running"><svg viewBox="0 0 120 120"><rect x="8" y="8" width="104" height="104" rx="22" fill="#f5f6f5"/><circle cx="60" cy="60" r="46" fill="#f5bd40"/><path d="M60 14a46 46 0 0 1 40 24H60a22 22 0 0 0-21 15L21 36a46 46 0 0 1 39-22z" fill="#dd5544"/><path d="M21 36l20 34a22 22 0 0 0 14 11L42 102A46 46 0 0 1 21 36z" fill="#58a05a"/><circle cx="60" cy="60" r="21" fill="#fff"/><circle cx="60" cy="60" r="16" fill="#4485e8"/></svg><i class="dock-dot"></i></div>
    <div class="dock-item running"><svg viewBox="0 0 120 120"><rect x="8" y="8" width="104" height="104" rx="22" fill="#fff"/><rect x="34" y="26" width="64" height="66" rx="4" fill="#3f8a5d"/><rect x="66" y="26" width="32" height="18" fill="#5fc08a"/><rect x="66" y="44" width="32" height="16" fill="#4da070"/><rect x="34" y="76" width="64" height="16" fill="#2a5f3c"/><rect x="16" y="42" width="38" height="38" rx="3" fill="#217346"/><text x="35" y="70" class="svg-white" font-size="26" text-anchor="middle">X</text></svg><i class="dock-dot"></i></div>
    <div class="dock-item running"><svg viewBox="0 0 120 120"><defs><linearGradient id="ms" x1="0" y1="0" x2="0" y2="1"><stop offset="0" stop-color="#6cc0f8"/><stop offset="1" stop-color="#2f7de8"/></linearGradient></defs><path d="M60 10c30 0 54 20 54 50 0 28-20 46-54 46-6 0-12-1-18-3-6 6-14 8-22 9 4-5 7-10 8-16C14 86 6 76 6 60c0-30 24-50 54-50z" fill="url(#ms)"/><path d="M80 58c18 0 34 12 34 30 0 16-14 28-34 28-4 0-8 0-11-2-2 3-4 1-0-2-16-6-23-14-23-24 0-18 16-30 34-30z" fill="#eef4fb"/><g fill="#2456a8"><circle cx="64" cy="87" r="5"/><circle cx="80" cy="87" r="5"/><circle cx="96" cy="87" r="5"/></g></svg><span class="dock-badge">75</span><i class="dock-dot"></i></div>
    <div class="dock-item running"><svg viewBox="0 0 120 120"><defs><linearGradient id="sky" x1="0" y1="0" x2="0" y2="1"><stop offset="0" stop-color="#3f86dc"/><stop offset="1" stop-color="#c9e0f4"/></linearGradient></defs><g transform="rotate(-11 60 60)"><rect x="16" y="6" width="84" height="108" fill="#fff" stroke="#fff" stroke-width="4" stroke-dasharray="4 3"/><rect x="24" y="14" width="68" height="92" fill="url(#sky)"/></g><path d="M28 28c8 6 14 16 18 28 12 4 24 14 32 28-8-4-16-6-24-6-2 8-6 12-10 16-2-10 2-18-2-28-6-10-12-24-14-38z" fill="#8f6a3c"/><circle cx="88" cy="90" r="20" fill="none" stroke="#5a6f86" stroke-width="2"/><circle cx="88" cy="90" r="7" fill="#4f8fdf"/></svg><i class="dock-dot"></i></div>
    <div class="dock-item running"><svg viewBox="0 0 120 120"><rect x="8" y="8" width="104" height="104" rx="20" fill="#f7f7f7"/><ellipse cx="60" cy="62" rx="40" ry="44" fill="none" stroke="#3a3a3a" stroke-width="6"/><path d="M66 10l14 8-12 8z" fill="#3a3a3a"/><circle cx="45" cy="50" r="4.500" fill="#3a3a3a"/><circle cx="75" cy="50" r="4.500" fill="#3a3a3a"/><path d="M38 68c6 22 36 22 44 0" fill="none" stroke="#3a3a3a" stroke-width="5"/></svg><i class="dock-dot"></i></div>
    <span class="dock-sep dock-sep-2"></span>
    <div class="dock-item dock-trash"><svg viewBox="0 0 120 120"><defs><linearGradient id="tr" x1="0" y1="0" x2="1" y2="0"><stop offset="0" stop-color="#6a6d70"/><stop offset=".4" stop-color="#9a9c9e"/><stop offset="1" stop-color="#5a5c5e"/></linearGradient></defs><g transform="translate(0 -8) scale(1 1.120)"><path d="M16 26c0-8 88-8 88 0l-9 84c-1 9-69 9-70 0z" fill="url(#tr)"/><ellipse cx="60" cy="26" rx="42" ry="10" fill="#3c3e40"/><path d="M24 24l8-16 10 10 10-12 12 14 10-14 8 12 12-2 2 12-30 14-30-2z" fill="#e6e6e6"/><path d="M40 20l6 14 8-8zM70 18l10 12-14 4z" fill="#c44d3c"/><path d="M56 26l8 10 6-8z" fill="#4a8fd8"/></g></svg><i class="dock-dot off"></i></div>
  </div>
</footer>
</body>
</html>
```
FILE: styles.css
```css
* { box-sizing: border-box; }
html, body { margin: 0; padding: 0; width: 2880px; height: 1800px; overflow: hidden; }
body { font-family: Inter, "Liberation Sans", sans-serif; color: #212529; background: #0e1f33; display: flex; flex-direction: column; }
.defs { position: absolute; }
p, h1, h2, h5 { margin: 0; }
.svg-white { fill: #fff; font-family: "Open Sans", sans-serif; }
.svg-ink { fill: #222; font-family: "Open Sans", sans-serif; font-weight: 300; }
.svg-teal { fill: #4fb3a3; font-family: "Open Sans", sans-serif; }
.petals ellipse { mix-blend-mode: multiply; opacity: .85; }

/* menu bar */
.menubar { height: 46px; flex: none; display: flex; align-items: center; color: #fff; font-size: 27px; background: linear-gradient(90deg, #29446a 0, #2b4566 60%, #35496a 80%, #4a535f 100%); border-bottom: 2px solid #1d2c3b; padding-left: 38px; }
.apple { width: 32px; height: 36px; margin-top: -4px; }
.menus { display: flex; margin-left: 38px; gap: 37.500px; }
.menu-app { font-weight: 700; font-size: 28px; }
.status { margin-left: auto; display: flex; align-items: center; height: 100%; }
.st { flex: none; }
.st-cc { width: 40px; height: 40px; margin-right: 28px; }
.st-tm { width: 36px; height: 36px; margin-right: 45px; }
.st-bt { width: 20px; height: 36px; margin-right: 30px; }
.st-wifi { width: 40px; height: 32px; margin-right: 24px; }
.st-pct { font-size: 24px; width: 58px; }
.st-bat { width: 48px; height: 28px; margin-right: 30px; }
.st-time { width: 226px; font-size: 27px; white-space: nowrap; }
.st-search { width: 30px; height: 30px; margin-right: 36px; }
.st-siri { width: 32px; height: 32px; margin-right: 26px; }
.st-cc2 { width: 36px; height: 28px; margin-right: 47px; }

/* window */
.window { height: 1594px; flex: none; display: flex; flex-direction: column; overflow: hidden; border-radius: 12px 12px 0 0; }
.tabstrip { height: 84px; flex: none; background: #16373d; border-top: 2px solid #58706f; display: flex; align-items: flex-end; position: relative; }
.lights { width: 155px; height: 82px; display: flex; gap: 16px; padding: 29px 0 0 27px; flex: none; }
.light { width: 24px; height: 24px; border-radius: 50%; }
.red { background: #f0645a; } .yellow { background: #e3c24b; } .green { background: #6cbb4b; }
.tab { width: 479px; height: 68px; flex: none; display: flex; align-items: center; padding: 0 24px 2px 24px; color: #fff; font-size: 24px; letter-spacing: -.15px; position: relative; }
.tab-sep::after { content: ""; position: absolute; right: 0; top: 10px; height: 40px; width: 2px; background: #55696c; }
.tab-active { background: #27595e; border-radius: 16px 16px 0 0; width: 480px; }
.fav { width: 32px; height: 32px; flex: none; margin-right: 17px; }
.tab-text { flex: 1; white-space: nowrap; overflow: hidden; min-width: 0; }
.tab-fade { -webkit-mask-image: linear-gradient(90deg, #000 88%, transparent 99%); mask-image: linear-gradient(90deg, #000 88%, transparent 99%); }
.tab-x { width: 14px; height: 16px; flex: none; margin-left: 14px; }
.newtab { width: 24px; height: 24px; margin: 0 0 22px 31px; flex: none; }
.tabmenu { width: 20px; height: 12px; margin: 0 34px 28px auto; flex: none; }

.toolbar { height: 72px; flex: none; background: #27595e; display: flex; align-items: center; padding-left: 11px; }
.navbtns { display: flex; width: 205px; flex: none; }
.navbtns svg { width: 28px; height: 28px; margin: 0 18.500px; }
.omnibox { width: 2133px; height: 56px; flex: none; background: #234349; border-radius: 28px; display: flex; align-items: center; padding-left: 27px; margin-top: -2px; }
.lock { width: 18px; height: 24px; flex: none; }
.url { margin-left: 23px; font-size: 28px; letter-spacing: -.1px; color: #a5b5b7; white-space: nowrap; }
.url-host { color: #fff; }
.omni-ico { flex: none; }
.share { width: 24px; height: 32px; margin-left: auto; margin-right: 40px; }
.star { width: 30px; height: 30px; margin-right: 18px; }
.exts { display: flex; width: 256px; margin-left: 15px; flex: none; margin-top: -2px; }
.exts svg { width: 32px; height: 32px; margin: 0 16px; }
.paused { width: 174px; height: 56px; flex: none; margin: -2px 0 0 5px; border: 2px solid #cfdced; border-radius: 28px; background: #3e6a74; display: flex; align-items: center; padding-left: 2px; font-size: 25px; color: #d4e4f4; }
.avatar { width: 44px; height: 46px; margin-right: 20px; flex: none; }
.kebab { width: 6px; height: 26px; margin: -2px 0 0 34px; flex: none; }

.bookmarks { height: 64px; flex: none; background: #27595e; border-bottom: 2px solid #4d7478; display: flex; align-items: center; padding: 0 0 8px 28px; gap: 33px; color: #fff; font-size: 24px; letter-spacing: -.16px; white-space: nowrap; }
.bm { display: flex; align-items: center; gap: 16px; }
.bm svg { width: 32px; height: 32px; flex: none; }
.bm-other { margin-left: auto; padding-left: 22px; border-left: 2px solid #5c8083; display: flex; align-items: center; gap: 16px; margin-right: 22px; height: 44px; }
.bm-other svg { width: 32px; height: 30px; }

.content { flex: 1; display: flex; min-height: 0; position: relative; }
.win-fade { position: absolute; left: 0; right: 0; bottom: 0; height: 70px; background: linear-gradient(rgba(0,0,0,0), rgba(0,0,0,.075)); pointer-events: none; }

/* sidebar */
.sidebar { width: 760px; flex: none; background: #d3d8dd; padding: 0 30px 8px; display: flex; flex-direction: column; font-family: "Open Sans", sans-serif; overflow: hidden; }
.brand { height: 170px; flex: none; border-bottom: 2px solid #aab0b5; display: flex; }
.brand-left { width: 492px; padding-top: 32px; }
.brand-mark { display: flex; align-items: center; height: 88px; }
.wave-logo { width: 88px; height: 88px; flex: none; }
.wordmark { margin-left: 18px; font-size: 80px; font-weight: 300; color: #555; line-height: 88px; }
.tagline { margin: 6px 0 0 4px; font-size: 24px; line-height: 36px; color: #555; white-space: nowrap; }
.brand-right { padding-top: 60px; font-size: 28px; line-height: 37px; color: #444; }
.brand-right a { color: #1a4fc0; }
.address { margin-top: 20px; height: 48px; flex: none; display: flex; align-items: center; }
.address-label { width: 130px; font-size: 30px; color: #111; }
.address-box { width: 570px; height: 48px; background: #fff; border-radius: 8px; display: flex; align-items: center; padding: 0 12px 0 10px; }
.address-url { width: 504px; overflow: hidden; white-space: nowrap; font-family: "Liberation Sans", sans-serif; font-size: 26.500px; color: #111; }
.address-reload { width: 28px; height: 28px; margin-left: 14px; flex: none; }
.styles-box { margin-top: 30px; height: 88px; flex: none; background: #fff; border-radius: 10px; display: flex; align-items: center; padding: 8px 0 0 160px; }
.styles-label { font-size: 30px; color: #222; width: 116px; }
.sw-text { font-size: 22px; color: #222; }
.sw-off { width: 56px; }
.sw-track { width: 48px; height: 28px; background: #a5bfc9; border-radius: 14px 0 0 14px; display: flex; justify-content: flex-end; align-items: center; position: relative; margin-right: 45px; }
.sw-knob { width: 42px; height: 42px; border-radius: 50%; background: #5076b3; border: 2px solid #fff; box-shadow: 0 2px 4px rgba(0,0,0,.3); margin-right: -35px; flex: none; }
.details-title { margin-top: 20px; height: 60px; line-height: 60px; font-size: 42px; font-weight: 400; color: #111; flex: none; }
.side-tabs { margin-top: 17px; height: 101px; flex: none; background: #e0e4e8; border-radius: 12px 12px 0 0; display: grid; grid-template-columns: repeat(5, 140px); }
.side-tab { display: flex; flex-direction: column; align-items: center; font-size: 26px; color: #222; padding-top: 12px; border-radius: 12px 12px 0 0; white-space: nowrap; }
.side-tab svg { width: 40px; height: 46px; flex: none; }
.side-tab .side-contrast { width: 52px; height: 46px; }
.side-tab span { margin-top: 6px; line-height: 36px; }
.side-tab-active { background: #fff; border-bottom: 3px dotted #2a5fb0; }
.panel { flex: 1; min-height: 0; background: #fff; border-radius: 0 0 14px 14px; padding: 23px 20px 0; overflow: hidden; display: flex; flex-direction: column; gap: 12px; }
.card { flex: none; background: #f3f3f3; border-radius: 8px; padding: 19px 0 12px 14px; color: #444; }
.card:nth-child(1) { height: 322px; }
.card:nth-child(2) { height: 203px; }
.card-head { display: flex; align-items: center; height: 50px; font-size: 44px; }
.cb { width: 26px; height: 26px; margin: 0; flex: none; accent-color: #2a78f0; }
.cb-head { margin-top: 10px; }
.cat-ico { width: 36px; height: 36px; margin: -2px 10px 0 16px; flex: none; }
.cat-contrast { width: 50px; height: 24px; margin: 10px 11px 0 16px; }
.cat-alert { width: 40px; height: 36px; margin-right: 11px; }
.sub { display: flex; align-items: center; height: 40px; margin: 12px 0 0 40px; font-size: 32px; gap: 5px; white-space: nowrap; }
.sub .cb { margin-top: 8px; margin-right: 3px; }
.sub-tight { margin-left: -2px; }
.sub-plain { margin-left: 34px; }
.sub-gap { margin-top: 12px; }
.sub-last { margin-top: 16px; }
.sub:not(.sub-plain) > span:not(.sub-tight) { margin-left: -2px; }
.ico-row { display: flex; align-items: flex-start; }
.ico-row-dotted { margin: 3px 0 0 78px; }
.ico-dotted { width: 68px; height: 66px; border: 2px dotted #ccc; display: flex; align-items: center; justify-content: center; margin-right: 10px; }
.ico-row-2 { margin: 6px 0 0 84px; gap: 16px; }
.ico-row-c { margin-top: 8px; }
.mini-wrap { width: 52px; height: 52px; background: #fff; border-radius: 10px; display: flex; align-items: center; justify-content: center; flex: none; }
.mini { width: 44px; height: 44px; overflow: visible; }
.info { width: 32px; height: 32px; flex: none; margin-top: 2px; }
.info-first { margin-top: 7px; }

/* main */
.report { flex: 1; min-width: 0; background: #fff; position: relative; overflow: hidden; }
.notice { height: 146px; background: #f9f9f9; border-bottom: 2px solid #7d8477; padding-top: 4px; text-align: center; font-family: "Open Sans", sans-serif; }
.notice-text { font-size: 28px; line-height: 36px; color: #111; }
.notice-row { display: flex; justify-content: center; align-items: center; gap: 20px; margin: 17px 0 0 16px; }
.ico-64 { width: 64px; height: 64px; flex: none; }
.ringed { outline: 4px solid #fff; border-radius: 12px; }
.tag { display: inline-block; background: #3a7a4e; border: 2px solid #bdbdbd; border-width: 2px 0; color: #fff; font-family: "Open Sans", sans-serif; font-size: 28px; line-height: 38px; height: 42px; white-space: nowrap; padding: 0 2px; outline: 1px solid #bdbdbd; }

.site-header { height: 270px; background: #a8a8a8; display: flex; align-items: flex-start; overflow: hidden; color: #262a2e; font-size: 31px; letter-spacing: -.35px; }
.hdr-shield { width: 84px; height: 84px; flex: none; margin: 84px 0 0 2px; }
.site-brand { width: 670px; height: 76px; margin: 80px 0 0 65px; display: flex; align-items: center; flex: none; }
.head76 { width: 76px; height: 76px; flex: none; }
.fish { width: 64px; height: 48px; margin: -10px 0 0 4px; flex: none; }
.site-name { margin: -10px 0 0 10px; font-size: 52px; font-weight: 500; letter-spacing: -.9px; color: #212529; white-space: nowrap; }
.hdr-list { margin-top: 4px; }
.nav-col { flex: none; margin-top: 20px; display: flex; flex-direction: column; align-items: flex-start; }
.nav-home { width: 248px; margin-left: 19px; }
.nav-recipes { width: 258px; }
.nav-row { display: flex; align-items: center; height: 76px; gap: 6px; }
.nav-link { margin-top: -6px; }
.link-ico { width: 76px; height: 77px; flex: none; }
.aria-ico { width: 76px; height: 76px; flex: none; }
.nav-row-aria { display: flex; align-items: center; gap: 7px; margin: 12px 0 0 6px; height: 76px; }
.tag-block { margin-top: 10px; }
.tag-r1 { margin-top: 10px; }
.tag-r2 { margin-top: 6px; }
.nav-drop { flex: none; margin-top: 12px; height: 48px; display: flex; align-items: center; gap: 9px; }
.nav-products { width: 218px; }
.nav-account { width: 205px; }
.caret { width: 0; height: 0; border-left: 10px solid transparent; border-right: 10px solid transparent; border-top: 11px solid #212529; margin-top: -4px; }
.cart { width: 76px; flex: none; margin-top: 9px; display: flex; flex-direction: column; align-items: center; }
.bag { width: 38px; height: 42px; margin-bottom: 1px; flex: none; }
.cart-euro { line-height: 48px; margin-top: 7px; }
.cart-val { line-height: 47px; }
.hdr-search { margin: 84px 0 0 23px; }
.hdr-pill { width: 52px; height: 88px; flex: none; margin: 82px 0 0 18px; background: #fff; border: 2px solid #c8d2d8; border-radius: 16px; }
.hdr-partial { margin: 91px 0 0 5px; }

.page { padding-left: 124px; }
.h1-row { display: flex; align-items: center; margin: 101px 0 0 4px; height: 86px; }
.h1-row .head76 { margin-top: 12px; }
h1 { margin: -2px 0 0 7px; font-size: 72px; font-weight: 500; line-height: 86px; color: #212529; letter-spacing: -.5px; }
.lead { margin-top: 72px; font-size: 38px; letter-spacing: -.75px; line-height: 60px; white-space: nowrap; color: #212529; }
.columns { display: flex; }
.col-left { width: 624px; flex: none; }
.col-right { width: 1044px; flex: none; }
.head-row { display: flex; align-items: flex-start; }
.head-row .head76 { margin: -6px 0 0 6px; }
.head-addr { margin-top: 107px; height: 72px; }
.ico-orange { width: 72px; height: 72px; margin: 2px 0 0 18px; flex: none; overflow: visible; }
.ico-map { width: 46px; height: 38px; margin: 11px 0 0 4px; flex: none; }
.ico-ariax { width: 64px; height: 68px; margin-left: 12px; flex: none; }
h5 { font-size: 38px; letter-spacing: -.3px; font-weight: 500; line-height: 48px; white-space: nowrap; color: #212529; }
.addr-title { margin: 6px 0 0 20px; }
.muted { font-size: 31px; letter-spacing: -.3px; line-height: 48px; color: #5a5f64; }
.muted strong { font-weight: 700; }
.addr-lines { margin-top: 55px; }
.head-call { margin-top: 59px; height: 64px; }
.phone { width: 40px; height: 40px; margin: 7px 0 0 6px; flex: none; }
.call-title { margin: 4px 0 0 10px; }
.call-text { margin-top: 61px; width: 500px; }
.head-form { margin: 59px 0 0 0; height: 64px; }
.form-title { margin: 5px 0 0 6px; }
.form-grid { display: grid; grid-template-columns: 497px 497px; column-gap: 50px; margin-top: 72px; }
.field-wide { grid-column: 1 / 3; }
.field-label { height: 64px; display: flex; align-items: flex-start; gap: 13px; font-size: 31px; letter-spacing: -.35px; line-height: 58px; }
.ico-label { width: 64px; height: 64px; flex: none; }
.ico-label-wide { margin-left: 8px; }
.form-input { display: block; width: 100%; height: 76px; margin: 12px 0; border: 2px solid #ced4da; border-radius: 8px; background: #fff; padding: 0 25px; font-family: Inter, "Liberation Sans", sans-serif; font-size: 31px; letter-spacing: -.15px; color: #212529; outline: none; }
.form-input::placeholder { color: #6c757d; opacity: 1; }
.form-area { height: 200px; resize: none; padding-top: 16px; line-height: 48px; }

.code-btn { position: absolute; left: 941px; bottom: 0; width: 181px; height: 91px; filter: drop-shadow(6px 2px 6px rgba(0,0,0,.35)); }
.code-shape { display: block; width: 181px; height: 91px; }
.code-label { position: absolute; left: 0; right: 0; top: 52px; text-align: center; font-family: "Open Sans", sans-serif; font-size: 32px; line-height: 40px; color: #e4f1ef; }

/* desktop and dock */
.desktop { height: 160px; flex: none; position: relative; overflow: hidden; }
.water { position: absolute; left: 0; top: 0; }
.dock { position: relative; margin-left: 283px; width: 2314px; height: 160px; background: #17293f; border: 2px solid #37495a; border-bottom: none; border-radius: 10px 10px 0 0; display: flex; padding-left: 5px; }
.dock-item { width: 136px; flex: none; display: flex; flex-direction: column; align-items: center; padding-top: 14px; position: relative; }
.dock-item svg { width: 120px; height: 120px; overflow: visible; flex: none; }
.dock-dot { width: 6px; height: 8px; border-radius: 3px; background: #8ba2b8; margin-top: 11px; flex: none; }
.dock-dot.off { background: transparent; }
.dock-badge { position: absolute; left: 87px; top: 11px; width: 48px; height: 48px; border-radius: 50%; background: #df4d40; color: #fff; font-size: 26px; text-align: center; line-height: 48px; font-family: Inter, sans-serif; letter-spacing: -.5px; }
.dock-sep { width: 2px; height: 120px; margin-top: 18px; background: #4b5b6c; flex: none; }
.dock-sep-1 { margin-left: 33px; margin-right: 27px; }
.dock-sep-2 { margin-left: 31px; margin-right: 28px; }
```
